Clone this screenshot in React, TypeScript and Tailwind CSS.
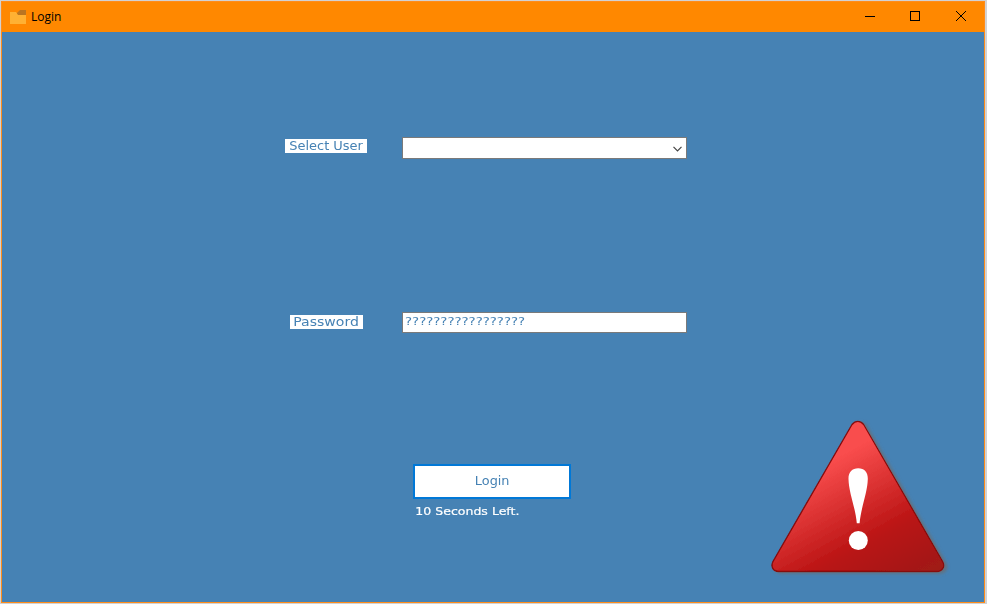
import React from "react";

const label = "flex h-[14px] items-center justify-center whitespace-nowrap bg-white text-[12px] leading-[14px] text-[#4682b4]";

function TitleBar() {
  return (
    <header className="flex h-[30px] shrink-0 items-center bg-[#ff8800] font-['Open_Sans',sans-serif] text-black">
      <svg className="ml-[8px] h-4 w-[17px]" viewBox="0 0 17 16">
        <path d="M7 4l3-3h6v6H7z" fill="#b97522" />
        <path d="M0 3h6l2 3h8v9H0z" fill="#ffb133" />
      </svg>
      <span className="ml-[4px] text-[12px] leading-[16px]">Login</span>
      <div className="ml-auto flex">
        <svg className="h-[30px] w-[138px]" viewBox="0 0 138 30" fill="none" stroke="#000" shapeRendering="crispEdges">
          <path d="M19 14.5h10" />
          <path d="M64.500 9.500h9v9h-9z" />
          <path d="M110 9l10 10M120 9l-10 10" shapeRendering="auto" />
        </svg>
      </div>
    </header>
  );
}

function WarningIcon() {
  return (
    <svg className="ml-[189px] mt-[-54px] h-[175px] w-[200px] shrink-0" viewBox="760 410 200 175">
      <defs>
        <linearGradient id="red" gradientUnits="userSpaceOnUse" x1="825" y1="464" x2="895.5" y2="594">
          <stop offset="0" stopColor="#f94d4d" />
          <stop offset="0.62" stopColor="#b81212" />
          <stop offset="1" stopColor="#9f1b18" />
        </linearGradient>
        <filter id="shadow" x="-10%" y="-10%" width="125%" height="125%">
          <feDropShadow dx="3" dy="1.500" stdDeviation="1.800" floodColor="#6b6b6b" floodOpacity="0.7" />
        </filter>
      </defs>
      <path
        d="M852 424.500Q854.500 421.400 857.800 421.400T863.700 424.500L942.700 561.500C945.500 566.500 942.500 571.500 937 571.500H778.500C773 571.500 770.500 566.500 773 561.500Z"
        fill="url(#red)"
        stroke="#850708"
        strokeWidth="1.300"
        filter="url(#shadow)"
      />
      <path d="M858.200 468.200C864.500 468.200 868 472.500 867.800 479C867.500 493 861 507 859.600 523.200H856.800C855.400 507 848.800 493 848.500 479C848.300 472.500 852 468.200 858.200 468.200Z" fill="#fff" />
      <circle cx="858.300" cy="540.500" r="9.500" fill="#fff" />
    </svg>
  );
}

export default function App() {
  return (
    <div className="h-[604px] w-[987px] overflow-hidden bg-[#d2d2d2] pl-px pt-px font-['DejaVu_Sans',sans-serif]">
      <div className="flex h-[602px] w-[984px] flex-col border border-[#ff8c1a] bg-[#4682b4]">
        <TitleBar />
        <main className="flex flex-1 flex-col">
          <div className="mt-[105px] flex h-[22px] items-start pl-[283px]">
            <div className={label + " mt-[2px] w-[82px]"}>
              <span className="inline-block scale-x-[1.08]">Select User</span>
            </div>
            <div className="ml-[35px] flex h-[22px] w-[285px] items-center justify-end border border-[#7a7a7a] bg-white pr-[4px]">
              <svg className="mt-px h-[6px] w-[9px]" viewBox="0 0 9 6" fill="none" stroke="#444" strokeWidth="1.200">
                <path d="M.5.8l4 4 4-4" />
              </svg>
            </div>
          </div>
          <div className="mt-[153px] flex h-[21px] items-start pl-[288px]">
            <div className={label + " mt-[3px] w-[73px]"}>
              <span className="inline-block scale-x-[1.17]">Password</span>
            </div>
            <div className="ml-[39px] flex h-[21px] w-[285px] items-center border border-[#7a7a7a] bg-white pl-[2px] text-[11px] text-[#4682b4]">
              <span className="inline-block origin-left scale-x-[1.21]">?????????????????</span>
            </div>
          </div>
          <div className="mt-[131px] flex items-start pl-[411px]">
            <div className="w-[158px] shrink-0">
              <button className="flex h-[35px] w-[158px] items-center justify-center border-2 border-[#0078d7] bg-white pb-[2px] text-[12px] text-[#4682b4]">
                <span className="inline-block scale-x-[1.07]">Login</span>
              </button>
              <p className="mt-[5px] w-max origin-left scale-x-[1.14] whitespace-nowrap pl-[2px] text-[11px] leading-[15px] text-white [-webkit-text-stroke:0.2px_white]">
                10 Seconds Left.
              </p>
            </div>
            <WarningIcon />
          </div>
        </main>
      </div>
    </div>
  );
}
